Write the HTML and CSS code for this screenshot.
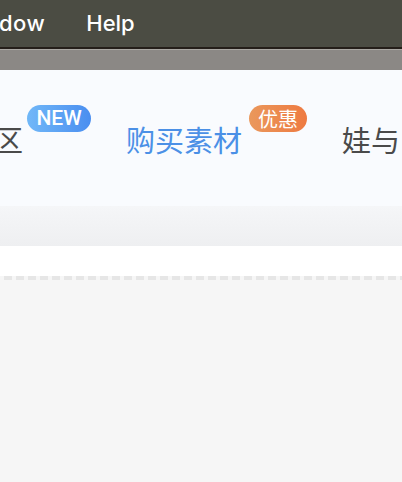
FILE: index.html
```html
<!DOCTYPE html>
<html lang="zh">
<head>
<meta charset="utf-8">
<link rel="stylesheet" href="styles.css">
</head>
<body>
<div class="menubar">
  <span class="menu menu-first">dow</span>
  <span class="menu">Help</span>
</div>
<div class="menu-edge"></div>
<div class="toolbar"></div>
<nav class="nav">
  <div class="item item-first">
    <span class="label">区</span>
    <span class="badge badge-new">NEW</span>
  </div>
  <div class="item item-active">
    <span class="label">购买素材</span>
    <span class="badge badge-sale">优惠</span>
  </div>
  <div class="item">
    <span class="label">娃与</span>
  </div>
</nav>
<div class="band"></div>
<div class="spacer"></div>
<div class="content"></div>
</body>
</html>
```
FILE: styles.css
```css
html, body {
  margin: 0;
  padding: 0;
  width: 402px;
  height: 482px;
  overflow: hidden;
  background: #f6f6f6;
}
.menubar {
  height: 47px;
  background: #4b4c43;
  display: flex;
  align-items: center;
  font-family: Inter, "Liberation Sans", Arial, sans-serif;
  font-size: 22px;
  font-weight: 500;
  color: #ffffff;
  white-space: nowrap;
}
.menu {
  margin-left: 41px;
  padding-bottom: 1px;
}
.menu-first {
  margin-left: -1px;
  letter-spacing: 0.5px;
}
.menu-edge {
  height: 2px;
  background: #241e19;
  border-bottom: 1px solid #aaa7a3;
}
.toolbar {
  height: 20px;
  background: #8b8885;
}
.nav {
  height: 136px;
  background: #f9fbfe;
  display: flex;
  align-items: center;
  font-family: "Noto Sans CJK SC", "Noto Sans", sans-serif;
  font-size: 29px;
  color: #4a4a4a;
  white-space: nowrap;
  overflow: hidden;
}
.item {
  display: flex;
  align-items: center;
  position: relative;
  margin-top: 2px;
}
.item-first {
  margin-left: -6px;
}
.item-active {
  margin-left: 35px;
  color: #4b90e6;
}
.item-active + .item {
  margin-left: 35px;
}
.label {
  line-height: 40px;
}
.badge {
  align-self: flex-start;
  margin-top: -14px;
  height: 27px;
  border-radius: 14px;
  color: #ffffff;
  line-height: 27px;
  text-align: center;
}
.badge-new {
  margin-left: 4px;
  width: 64px;
  font-family: Roboto, "Liberation Sans", Arial, sans-serif;
  font-size: 21px;
  font-weight: 500;
  background: linear-gradient(90deg, #71b8f8, #4a8ef0);
}
.badge-sale {
  margin-left: 7px;
  width: 58px;
  font-family: "Noto Sans CJK SC", sans-serif;
  font-size: 20px;
  background: linear-gradient(90deg, #ea985c, #ee7a41);
}
.band {
  height: 40px;
  background: linear-gradient(180deg, #f5f6f8, #eeeff1);
}
.spacer {
  height: 30px;
  background: #ffffff;
}
.content {
  height: 4px;
  margin-left: 4px;
  background: repeating-linear-gradient(90deg, #e6e6e6 0 8px, transparent 8px 12px);
}
```
